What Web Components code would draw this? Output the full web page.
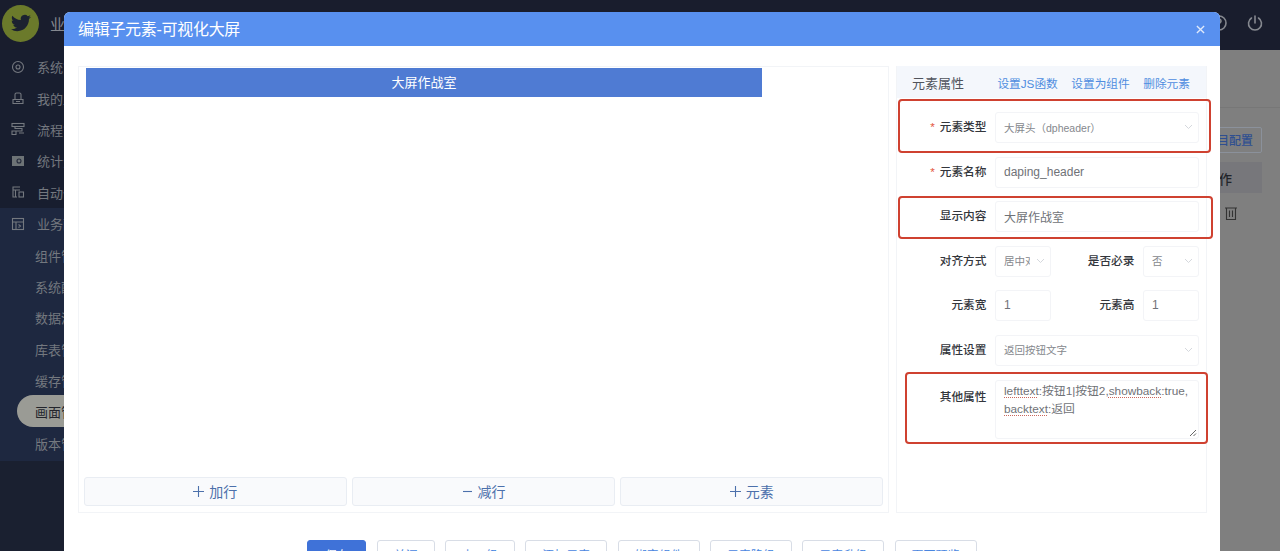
<!DOCTYPE html>
<html lang="zh">
<head>
<meta charset="utf-8">
<title>编辑子元素</title>
<style>
  html, body { margin: 0; height: 100%; overflow: hidden; background: #7f7f7f; }
  body { font-family: "Liberation Sans", "Noto Sans CJK SC", sans-serif; }
</style>
</head>
<body>
<app-shell>
  <edit-modal heading="编辑子元素-可视化大屏">
    <canvas-panel slot="left"></canvas-panel>
    <prop-panel slot="right"></prop-panel>
  </edit-modal>
</app-shell>

<script>
const icons = {
  gear: '<circle cx="7" cy="7" r="5.5"/><circle cx="7" cy="7" r="2"/>',
  user: '<path d="M2 12.5h10v-4H2zM4 8.5V3.5a1.5 1.5 0 0 1 1.5-1.5h3A1.5 1.5 0 0 1 10 3.5v5M5 10.5h4"/>',
  flow: '<rect x="1" y="1.5" width="12" height="3"/><path d="M4 4.5v2h7v2.5H4M1 9h4v3.5H1zM8 11h5"/>',
  chart: '<rect x="1" y="2" width="12" height="10" fill="#6d7376" stroke="none"/><circle cx="8" cy="7" r="2" stroke="#23293a"/>',
  auto: '<path d="M9 2H2v10h4M2 5h7M4.500 5v7"/><rect x="8" y="7" width="4.500" height="5"/>',
  biz: '<rect x="1.500" y="1.500" width="11" height="11"/><path d="M1.500 5h11M5 5v7.500M7.500 7.500l2 1.500-2 1.500"/>',
};

customElements.define('nav-item', class extends HTMLElement {
  constructor() {
    super();
    const icon = icons[this.getAttribute('icon')];
    this.attachShadow({ mode: 'open' }).innerHTML = `
      <style>
        :host {
          display: flex;
          align-items: center;
          height: 31.4px;
          padding-left: 11px;
          gap: 12px;
          font-size: 13px;
          color: #74787f;
          white-space: nowrap;
          position: relative;
        }
        :host([sub]) { padding-left: 35px; }
        :host([active]) { color: #23252c; }
        :host([active])::before {
          content: '';
          position: absolute;
          left: 17px;
          top: -1px;
          width: 160px;
          height: 32px;
          border-radius: 16px;
          background: #9a9b95;
        }
        span { position: relative; }
        svg { width: 14px; height: 14px; fill: none; stroke: #74787f; stroke-width: 1.100; flex: none; }
      </style>
      ${icon ? `<svg viewBox="0 0 14 14">${icon}</svg>` : ''}
      <span><slot></slot></span>`;
  }
});

customElements.define('side-nav', class extends HTMLElement {
  constructor() {
    super();
    this.attachShadow({ mode: 'open' }).innerHTML = `
      <style>
        :host { display: flex; flex-direction: column; width: 200px; background: #1a2030; }
        .top { background: #181e2f; padding-top: 1px; }
        .sub { background: #1e2840; padding-bottom: 2px; }
      </style>
      <div class="top">
        <nav-item icon="gear">系统管理</nav-item>
        <nav-item icon="user">我的工作</nav-item>
        <nav-item icon="flow">流程管理</nav-item>
        <nav-item icon="chart">统计分析</nav-item>
        <nav-item icon="auto">自动化</nav-item>
      </div>
      <div class="sub">
        <nav-item icon="biz">业务配置</nav-item>
        <nav-item sub>组件管理</nav-item>
        <nav-item sub>系统配置</nav-item>
        <nav-item sub>数据源</nav-item>
        <nav-item sub>库表管理</nav-item>
        <nav-item sub>缓存管理</nav-item>
        <nav-item sub active>画面管理</nav-item>
        <nav-item sub>版本管理</nav-item>
      </div>`;
  }
});

customElements.define('top-bar', class extends HTMLElement {
  constructor() {
    super();
    this.attachShadow({ mode: 'open' }).innerHTML = `
      <style>
        :host {
          display: flex;
          align-items: center;
          height: 50px;
          background: #191d2d;
          color: #85888f;
          padding: 0 16px 4px 2px;
          box-sizing: border-box;
        }
        .logo {
          width: 37px;
          height: 37px;
          border-radius: 50%;
          background: #6b7a2b;
          display: flex;
          align-items: center;
          justify-content: center;
        }
        .logo svg { width: 20px; height: 20px; fill: #1c2230; }
        .name { margin-left: 11px; font-size: 15px; flex: 1; }
        .tools { display: flex; align-items: center; gap: 18px; }
        .tools svg { width: 18px; height: 18px; fill: none; stroke: #85888f; stroke-width: 1.600; display: block; }
      </style>
      <div class="logo"><svg viewBox="0 0 24 24"><path d="M23.953 4.57a10 10 0 01-2.825.775 4.958 4.958 0 002.163-2.723c-.951.555-2.005.959-3.127 1.184a4.92 4.92 0 00-8.384 4.482C7.69 8.095 4.067 6.13 1.64 3.162a4.822 4.822 0 00-.666 2.475c0 1.71.87 3.213 2.188 4.096a4.904 4.904 0 01-2.228-.616v.06a4.923 4.923 0 003.946 4.827 4.996 4.996 0 01-2.212.085 4.936 4.936 0 004.604 3.417 9.867 9.867 0 01-6.102 2.105c-.39 0-.779-.023-1.17-.067a13.995 13.995 0 007.557 2.209c9.053 0 13.998-7.496 13.998-13.985 0-.21 0-.42-.015-.63A9.935 9.935 0 0024 4.59z"/></svg></div>
      <div class="name">业</div>
      <div class="tools">
        <svg viewBox="0 0 18 18"><circle cx="9" cy="9" r="7"/><path d="M7 7a2 2 0 1 1 3 1.700c-.7.400-1 .8-1 1.600M9 12.500v.8"/></svg>
        <svg viewBox="0 0 18 18"><path d="M5.500 4a6.500 6.500 0 1 0 7 0M9 2v7" stroke-linecap="round"/></svg>
      </div>`;
  }
});

customElements.define('page-behind', class extends HTMLElement {
  constructor() {
    super();
    this.attachShadow({ mode: 'open' }).innerHTML = `
      <style>
        :host { display: block; flex: 1; background: #7f7f7f; padding: 57px 18px 0 0; font-size: 12px; }
        .line { height: 1px; background: #777; margin-left: 800px; margin-right: -18px; }
        .tools { display: flex; justify-content: flex-end; margin-top: 19px; }
        .tools span {
          display: block;
          height: 24px;
          line-height: 26px;
          padding: 0 8px 0 4px;
          border: 1px solid #8b919b;
          border-radius: 2px;
          color: #2f4f90;
          font-weight: 500;
        }
        .head {
          display: flex;
          justify-content: flex-end;
          margin-top: 9px;
          height: 31px;
          line-height: 35px;
          background: #77777b;
          padding-right: 30px;
          font-size: 13px;
          color: #22242a;
          font-weight: 500;
        }
        .row { display: flex; justify-content: flex-end; padding: 14px 25px 0 0; }
        svg { width: 12px; height: 13px; fill: none; stroke: #333; stroke-width: 1.100; }
      </style>
      <div class="line"></div>
      <div class="tools"><span>项目配置</span></div>
      <div class="head">操作</div>
      <div class="row"><svg viewBox="0 0 12 13"><path d="M0 1h12M1.500 1v11.500h9V1M4.500 3.500v6.500M7.500 3.500v6.500"/></svg></div>`;
  }
});

customElements.define('app-shell', class extends HTMLElement {
  constructor() {
    super();
    this.attachShadow({ mode: 'open' }).innerHTML = `
      <style>
        :host { display: flex; flex-direction: column; width: 1280px; height: 551px; overflow: hidden; position: relative; }
        .below { flex: 1; display: flex; min-height: 0; }
        .overlay { position: absolute; inset: 0; padding: 12px 60px 0 64px; }
      </style>
      <top-bar></top-bar>
      <div class="below"><side-nav></side-nav><page-behind></page-behind></div>
      <div class="overlay"><slot></slot></div>`;
  }
});

customElements.define('edit-modal', class extends HTMLElement {
  constructor() {
    super();
    this.attachShadow({ mode: 'open' }).innerHTML = `
      <style>
        :host { display: block; background: #fff; border-radius: 6px 6px 0 0; height: 600px; }
        header {
          display: flex;
          align-items: center;
          justify-content: space-between;
          height: 32px;
          padding: 0 14px 2px;
          background: #5890ef;
          border-radius: 6px 6px 0 0;
          color: #fff;
          font-size: 16px;
          letter-spacing: -0.3px;
        }
        header svg { width: 9px; height: 9px; stroke: #dfe9fb; stroke-width: 1.500; fill: none; margin: 2px 1px 0 0; }
        .body { display: flex; gap: 7px; padding: 20px 13px 0 14px; height: 447px; }
        ::slotted([slot=left]) { width: 811px; }
        ::slotted([slot=right]) { width: 311px; }
        footer { display: flex; justify-content: center; gap: 10.300px; margin-top: 27px; }
        button {
          height: 28px;
          padding: 0 16px;
          background: #fff;
          border: 1px solid #d8dde6;
          border-radius: 3px;
          color: #4a86e0;
          font: 12px "Liberation Sans", "Noto Sans CJK SC", sans-serif;
        }
        button.primary { background: #3f72d8; border-color: #3f72d8; color: #fff; padding: 0 16.500px; }
      </style>
      <header>
        <span>${this.getAttribute('heading')}</span>
        <svg viewBox="0 0 10 10"><path d="M1 1l8 8M9 1l-8 8"/></svg>
      </header>
      <div class="body"><slot name="left"></slot><slot name="right"></slot></div>
      <footer>
        <button class="primary">保存</button>
        <button>关闭</button>
        <button>上一级</button>
        <button>添加元素</button>
        <button>绑定组件</button>
        <button>元素降级</button>
        <button>元素升级</button>
        <button>页面预览</button>
      </footer>`;
  }
});

customElements.define('canvas-panel', class extends HTMLElement {
  constructor() {
    super();
    this.attachShadow({ mode: 'open' }).innerHTML = `
      <style>
        :host {
          display: flex;
          flex-direction: column;
          box-sizing: border-box;
          border: 1px solid #f2f4f7;
          padding: 1px 5px 6px 5px;
        }
        .bar {
          width: 676px;
          height: 26px;
          padding-bottom: 3px;
          margin-left: 2px;
          background: #4f7bd3;
          color: #fff;
          font-size: 13px;
          display: flex;
          align-items: center;
          justify-content: center;
        }
        .grow { flex: 1; }
        .actions { display: flex; gap: 5.500px; }
        .actions div {
          flex: 1;
          height: 29px;
          padding-bottom: 2px;
          box-sizing: border-box;
          border: 1px solid #e9edf3;
          border-radius: 3px;
          background: #f9fafc;
          color: #4c70ab;
          font-size: 14px;
          display: flex;
          align-items: center;
          justify-content: center;
          gap: 5px;
        }
        svg { width: 11px; height: 11px; stroke: #4c70ab; stroke-width: 1.100; fill: none; margin-top: 2px; }
      </style>
      <div class="bar">大屏作战室</div>
      <div class="grow"></div>
      <div class="actions">
        <div><svg viewBox="0 0 11 11"><path d="M5.500 0v11M0 5.500h11"/></svg>加行</div>
        <div><svg viewBox="0 0 11 11"><path d="M1 5.500h9"/></svg>减行</div>
        <div><svg viewBox="0 0 11 11"><path d="M5.500 0v11M0 5.500h11"/></svg>元素</div>
      </div>`;
  }
});

// one label + control cell of the property form
customElements.define('form-field', class extends HTMLElement {
  constructor() {
    super();
    const required = this.hasAttribute('required');
    const select = this.hasAttribute('select');
    this.attachShadow({ mode: 'open' }).innerHTML = `
      <style>
        :host { display: flex; font-size: 12px; }
        label {
          flex: none;
          width: var(--label, 89.500px);
          height: 30px;
          line-height: 30px;
          text-align: right;
          color: #33363c;
          font-size: 11.700px;
          font-weight: 500;
        }
        i { font-style: normal; color: #e2513c; margin-right: 5px; }
        .box {
          flex: 1;
          min-width: 0;
          margin-left: 8.500px;
          height: 31px;
          box-sizing: border-box;
          border: 1px solid #f3f4f7;
          border-radius: 3px;
          padding: 0 8px 1px;
          color: #6f7277;
          display: flex;
          align-items: center;
        }
        .box.sel { padding-right: 5.500px; color: #85888d; font-size: 10.500px; }
        .text { flex: 1; min-width: 0; overflow: hidden; white-space: nowrap; }
        svg { width: 9px; height: 6px; flex: none; stroke: #d5d8dd; fill: none; margin-left: 5.500px; }
      </style>
      <label>${required ? '<i>*</i>' : ''}${this.getAttribute('label')}</label>
      <div class="box ${select ? 'sel' : ''}">
        <div class="text"><slot></slot></div>
        ${select ? '<svg viewBox="0 0 9 6"><path d="M1 1l3.500 3.500L8 1"/></svg>' : ''}
      </div>`;
  }
});

customElements.define('note-field', class extends HTMLElement {
  constructor() {
    super();
    this.attachShadow({ mode: 'open' }).innerHTML = `
      <style>
        :host { display: flex; font-size: 11.800px; }
        label { flex: none; width: 89.500px; height: 33px; line-height: 33px; text-align: right; color: #33363c; font-size: 11.700px; font-weight: 500; }
        .box {
          flex: 1;
          margin-left: 8.500px;
          height: 59px;
          box-sizing: border-box;
          border: 1px solid #f3f4f7;
          border-radius: 3px;
          padding: 1px 8px;
          line-height: 18px;
          color: #6f7277;
          position: relative;
          white-space: nowrap;
        }
        u { text-decoration: underline dotted #c9685c 1px; text-underline-offset: 2px; }
        svg { position: absolute; right: 1px; bottom: 1px; width: 8px; height: 8px; stroke: #666; fill: none; }
      </style>
      <label>其他属性</label>
      <div class="box"><u>lefttext</u>:按钮1|按钮2,<u>showback</u>:true,<br><u>backtext</u>:返回
        <svg viewBox="0 0 8 8"><path d="M1 7l6-6M4.500 7L7 4.500"/></svg>
      </div>`;
  }
});

customElements.define('red-mark', class extends HTMLElement {
  constructor() {
    super();
    this.attachShadow({ mode: 'open' }).innerHTML = `
      <style>
        :host {
          position: absolute;
          box-sizing: border-box;
          border: 2px solid #cf4130;
          border-radius: 4px;
          pointer-events: none;
        }
      </style>`;
  }
});

customElements.define('prop-panel', class extends HTMLElement {
  constructor() {
    super();
    this.attachShadow({ mode: 'open' }).innerHTML = `
      <style>
        :host {
          display: block;
          position: relative;
          box-sizing: border-box;
          border: 1px solid #f2f4f7;
          border-width: 0 1px 1px 1px;
        }
        .head {
          display: flex;
          align-items: center;
          height: 32px;
          padding: 0 16px 0 15px;
          background: #f4f7fc;
          font-size: 13px;
          color: #50545c;
        }
        .head b { font-weight: 400; flex: 1; }
        .head a { font-size: 11.700px; color: #4f8de0; margin-left: 13.500px; }
        .rows { display: flex; flex-direction: column; gap: 13.600px; padding: 14px 7px 0 0; }
        .two { display: flex; }
        .two form-field:first-child { width: 154px; flex: none; }
        .two form-field:last-child { flex: 1; --label: 83.500px; }
      </style>
      <div class="head">
        <b>元素属性</b>
        <a>设置JS函数</a><a>设置为组件</a><a>删除元素</a>
      </div>
      <div class="rows">
        <form-field label="元素类型" required select>大屏头（dpheader）</form-field>
        <form-field label="元素名称" required>daping_header</form-field>
        <form-field label="显示内容">大屏作战室</form-field>
        <div class="two">
          <form-field label="对齐方式" select>居中对齐</form-field>
          <form-field label="是否必录" select>否</form-field>
        </div>
        <div class="two">
          <form-field label="元素宽">1</form-field>
          <form-field label="元素高">1</form-field>
        </div>
        <form-field label="属性设置" select>返回按钮文字</form-field>
        <note-field></note-field>
      </div>
      <red-mark style="left:1px;top:33px;width:313px;height:54px"></red-mark>
      <red-mark style="left:1px;top:130px;width:315px;height:43px"></red-mark>
      <red-mark style="left:8px;top:306px;width:303px;height:72px"></red-mark>`;
  }
});
</script>
</body>
</html>
